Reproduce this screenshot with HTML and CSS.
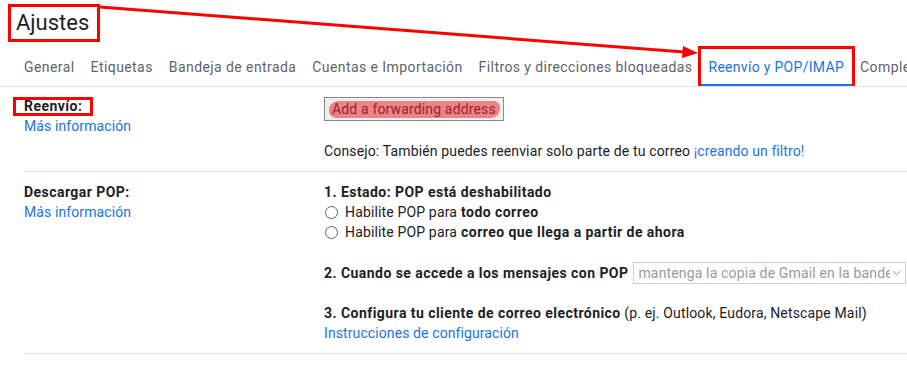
FILE: index.html
```html
<!DOCTYPE html>
<html lang="es">
<head>
    <meta charset="UTF-8">
    <meta name="viewport" content="width=device-width, initial-scale=1.0">
    <title>Ajustes</title>
    <link rel="stylesheet" href="styles.css">
</head>
<body>
    <div class="settings">
        <header class="settings-head">
            <h1 class="settings-title">Ajustes</h1>
        </header>

        <nav class="tabs">
            <a class="tab">General</a>
            <a class="tab">Etiquetas</a>
            <a class="tab">Bandeja de entrada</a>
            <a class="tab">Cuentas e Importación</a>
            <a class="tab">Filtros y direcciones bloqueadas</a>
            <a class="tab tab-active">Reenvío y POP/IMAP</a>
            <a class="tab tab-cut">Comple</a>
        </nav>

        <div class="rows">
            <div class="row row-first">
                <div class="row-label">
                    <span class="label-name label-marked">Reenvío:</span>
                    <a class="link">Más información</a>
                </div>
                <div class="row-value">
                    <button class="fwd-btn">Add a forwarding address</button>
                    <p class="hint">Consejo: También puedes reenviar solo parte de tu correo <a class="link">¡creando un filtro!</a></p>
                </div>
            </div>

            <div class="row">
                <div class="row-label">
                    <span class="label-name">Descargar POP:</span>
                    <a class="link">Más información</a>
                </div>
                <div class="row-value">
                    <p class="strong">1. Estado: POP está deshabilitado</p>
                    <label class="radio-line"><input type="radio" name="pop" class="radio"> Habilite POP para <b>todo correo</b></label>
                    <label class="radio-line"><input type="radio" name="pop" class="radio"> Habilite POP para <b>correo que llega a partir de ahora</b></label>

                    <div class="pop-access">
                        <span class="strong">2. Cuando se accede a los mensajes con POP</span>
                        <div class="fake-select">
                            <span class="fake-select-text">mantenga la copia de Gmail en la bande</span>
                            <svg class="chevron" viewBox="0 0 10 6" width="9" height="6"><path d="M1 1l4 4 4-4" fill="none" stroke="#b0b0b0" stroke-width="1.2"/></svg>
                        </div>
                    </div>

                    <p class="client"><b>3. Configura tu cliente de correo electrónico</b> (p. ej. Outlook, Eudora, Netscape Mail)</p>
                    <a class="link">Instrucciones de configuración</a>
                </div>
            </div>
        </div>

        <!-- flecha de la anotación -->
        <svg class="annot-arrow" width="907" height="367" viewBox="0 0 907 367">
            <line x1="100" y1="7" x2="684" y2="52" stroke="#f00" stroke-width="3"/>
            <polygon points="698,53 683,46 682,58" fill="#f00"/>
        </svg>
    </div>
</body>
</html>
```

FILE: styles.css
```css
* {
    box-sizing: border-box;
}

body {
    margin: 0;
    background: #fff;
    color: #202124;
    font-family: Roboto, 'Noto Sans', sans-serif;
    font-size: 14px;
    overflow: hidden;
}

.settings {
    position: relative;
    width: 907px;
    height: 367px;
    overflow: hidden;
}

.settings-head {
    padding: 4px 0 0 8px;
}

.settings-title {
    display: inline-block;
    margin: 0;
    padding: 2px 8px 2px 5px;
    border: 3px solid #f00;
    font-size: 22px;
    font-weight: 400;
    line-height: 28px;
    color: #1f1f1f;
}

.tabs {
    display: flex;
    padding-left: 16px;
    border-bottom: 1px solid #e3e3e3;
    white-space: nowrap;
    height: 45px;
    overflow: hidden;
}

.tab {
    position: relative;
    padding: 15px 8px 0;
    line-height: 20px;
    letter-spacing: 0.42px;
    color: #5f6368;
    flex-shrink: 0;
}

.tab-cut {
    padding-right: 0;
}

.tab-active {
    color: #1a73e8;
    letter-spacing: 0.3px;
    border-bottom: 3px solid #1a73e8;
    margin-bottom: -1px;
}

.tab-active::after {
    content: "";
    position: absolute;
    top: 4px;
    bottom: -5px;
    left: -2px;
    right: -3px;
    border: 3px solid #f00;
}

.rows {
    margin-left: 24px;
}

.row {
    display: grid;
    grid-template-columns: 300px minmax(0, 1fr);
    padding: 10px 0;
    border-bottom: 1px solid #e3e3e3;
}

.row-first {
    padding-top: 9px;
}

.row-label {
    display: flex;
    flex-direction: column;
    align-items: flex-start;
    line-height: 20px;
}

.label-name {
    font-weight: 700;
    letter-spacing: 0.45px;
}

.label-marked {
    position: relative;
}

.label-marked::after {
    content: "";
    position: absolute;
    top: 1px;
    bottom: 0;
    left: -11px;
    right: -11px;
    border: 3px solid #f00;
}

.link {
    color: #1a73e8;
    cursor: pointer;
    letter-spacing: 0.1px;
}

.row-value {
    min-width: 0;
    line-height: 20px;
    letter-spacing: 0.15px;
}

.row-value p {
    margin: 0;
}

.fwd-btn {
    position: relative;
    display: block;
    margin-top: 1px;
    height: 24px;
    padding: 0 7px;
    background: #efefef;
    border: 1px solid #8a8a8a;
    border-radius: 0;
    font-family: Roboto, sans-serif;
    font-size: 14px;
    letter-spacing: 0.15px;
    color: #202124;
}

.fwd-btn::after {
    content: "";
    position: absolute;
    top: 3px;
    bottom: 2px;
    left: 4px;
    right: 3px;
    border-radius: 9px 6px 9px 7px;
    background: rgba(236, 40, 48, 0.55);
}

.hint {
    margin-top: 20px !important;
}

.strong,
.row-value b {
    font-weight: 700;
    letter-spacing: 0.45px;
}

.radio-line {
    display: flex;
    align-items: center;
    height: 20px;
    white-space: nowrap;
}

.radio-line b {
    margin-left: 4px;
}

.radio {
    appearance: none;
    width: 13px;
    height: 13px;
    margin: 0 7px 0 1px;
    border: 1px solid #5f6368;
    border-radius: 50%;
}

.pop-access {
    display: flex;
    align-items: center;
    margin-top: 20px;
    height: 22px;
    white-space: nowrap;
}

.fake-select {
    display: flex;
    align-items: center;
    flex: 1;
    min-width: 0;
    height: 22px;
    margin: 0 1px 0 5px;
    padding: 0 4px;
    border: 1px solid #d0d0d0;
    color: #9a9a9a;
    letter-spacing: 0.15px;
}

.fake-select-text {
    flex: 1;
    min-width: 0;
    overflow: hidden;
}

.chevron {
    flex-shrink: 0;
    margin-left: 2px;
}

.client {
    margin-top: 19px !important;
}

.annot-arrow {
    position: absolute;
    top: 0;
    left: 0;
    pointer-events: none;
}
```
